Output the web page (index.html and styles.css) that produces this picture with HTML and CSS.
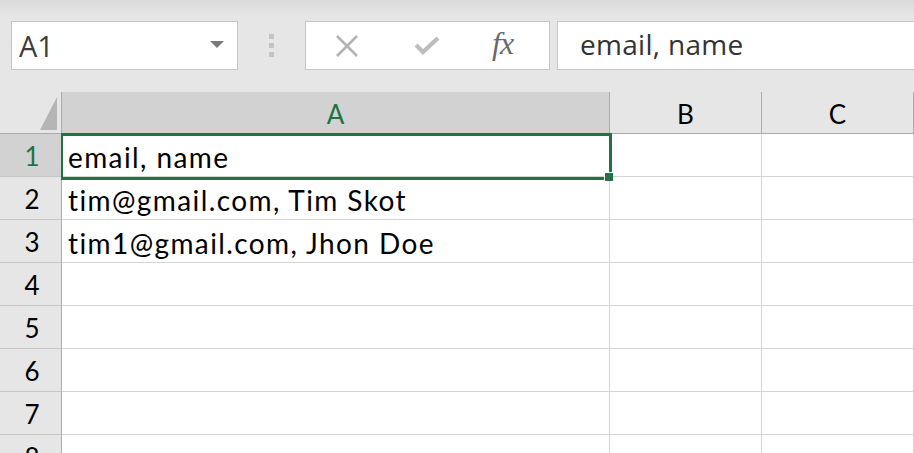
FILE: index.html
```html
<!DOCTYPE html>
<html>
<head>
<meta charset="utf-8">
<link rel="stylesheet" href="styles.css">
</head>
<body>
<div class="toolbar">
  <div class="namebox">
    <span class="nb-text">A1</span>
    <svg class="nb-arrow" width="14" height="8" viewBox="0 0 14 8"><polygon points="0,0 14,0 7,7" fill="#7a7a7a"/></svg>
  </div>
  <div class="grip"><i></i><i></i><i></i></div>
  <div class="fbuttons">
    <svg class="ico-x" width="24" height="22" viewBox="0 0 24 22"><path d="M2 1 L22 21 M22 1 L2 21" stroke="#b3b3b3" stroke-width="2.6" fill="none"/></svg>
    <svg class="ico-check" width="26" height="20" viewBox="0 0 26 20"><path d="M2 9 L9 16 L24 2" stroke="#bdbdbd" stroke-width="4.2" fill="none"/></svg>
    <span class="fx">fx</span>
  </div>
  <div class="formula">email, name</div>
</div>
<div class="sheet">
  <div class="grid">
    <div class="corner"><span class="tri"></span></div>
    <div class="colh sel">A</div>
    <div class="colh">B</div>
    <div class="colh">C</div>

    <div class="rowh sel">1</div><div class="cell">email, name</div><div class="cell"></div><div class="cell"></div>
    <div class="rowh">2</div><div class="cell">tim@gmail.com, Tim Skot</div><div class="cell"></div><div class="cell"></div>
    <div class="rowh">3</div><div class="cell">tim1@gmail.com, Jhon Doe</div><div class="cell"></div><div class="cell"></div>
    <div class="rowh">4</div><div class="cell"></div><div class="cell"></div><div class="cell"></div>
    <div class="rowh">5</div><div class="cell"></div><div class="cell"></div><div class="cell"></div>
    <div class="rowh">6</div><div class="cell"></div><div class="cell"></div><div class="cell"></div>
    <div class="rowh">7</div><div class="cell"></div><div class="cell"></div><div class="cell"></div>
    <div class="rowh">8</div><div class="cell"></div><div class="cell"></div><div class="cell"></div>
  </div>
  <div class="selection"><span class="handle"></span></div>
</div>
</body>
</html>
```
FILE: styles.css
```css
html, body {
  margin: 0;
  padding: 0;
  width: 914px;
  height: 453px;
  overflow: hidden;
  background: #e6e6e6;
}
.toolbar {
  height: 92px;
  box-sizing: border-box;
  padding-top: 21px;
  display: flex;
  align-items: flex-start;
  background: linear-gradient(#d9d9d9 0px, #e6e6e6 16px, #e6e6e6 100%);
  font-family: "Open Sans", "Noto Sans", sans-serif;
}
.namebox {
  margin-left: 11px;
  width: 227px;
  height: 49px;
  box-sizing: border-box;
  border: 1px solid #c6c6c6;
  background: #fff;
  display: flex;
  align-items: center;
  justify-content: space-between;
  padding: 0 13px 0 7px;
}
.nb-text {
  font-size: 29px;
  line-height: 45px;
  color: #3c3c3c;
}
.nb-arrow { margin-bottom: 2px; }
.grip {
  width: 67px;
  height: 49px;
  display: flex;
  flex-direction: column;
  align-items: center;
  justify-content: center;
  gap: 4px;
}
.grip i {
  display: block;
  width: 5px;
  height: 5px;
  background: #c4c4c4;
}
.fbuttons {
  width: 245px;
  height: 49px;
  box-sizing: border-box;
  border: 1px solid #c6c6c6;
  background: #fff;
  display: flex;
  align-items: center;
}
.ico-x { margin-left: 29px; }
.ico-check { margin-left: 55px; margin-top: 1px; }
.fx {
  margin-left: 52px;
  font-family: "Liberation Serif", "DejaVu Serif", serif;
  font-style: italic;
  font-size: 32px;
  color: #6a6a6a;
  letter-spacing: -1px;
  margin-top: -4px;
}
.formula {
  margin-left: 7px;
  flex: 1;
  height: 49px;
  box-sizing: border-box;
  border: 1px solid #c6c6c6;
  border-right: none;
  background: #fff;
  font-size: 28px;
  letter-spacing: 0.3px;
  color: #333;
  padding-left: 22px;
  line-height: 45px;
}
.sheet {
  position: relative;
}
.grid {
  display: grid;
  grid-template-columns: 62px 548px 152px 152px;
  grid-template-rows: 42px repeat(8, 43px);
  font-family: "Lato", "Open Sans", sans-serif;
  font-size: 26px;
  color: #000;
}
.grid > div {
  box-sizing: border-box;
  border-right: 1px solid #d4d4d4;
  border-bottom: 1px solid #d4d4d4;
}
.corner {
  background: #e6e6e6;
  border-right: 1px solid #ababab !important;
  border-bottom: 1px solid #ababab !important;
  position: relative;
}
.tri {
  position: absolute;
  right: 4px;
  bottom: 3px;
  width: 0;
  height: 0;
  border-left: 17px solid transparent;
  border-bottom: 33px solid #b5b5b5;
}
.colh {
  background: #e6e6e6;
  border-right: 1px solid #ababab !important;
  border-bottom: 1px solid #ababab !important;
  display: flex;
  align-items: center;
  justify-content: center;
  padding-top: 2px;
}
.colh.sel {
  background: #d2d2d2;
  color: #217346;
}
.rowh {
  background: #e6e6e6;
  border-right: 1px solid #ababab !important;
  border-bottom: 1px solid #c6c6c6 !important;
  display: flex;
  align-items: center;
  justify-content: center;
  padding-left: 3px;
  padding-top: 2px;
}
.rowh.sel {
  background: #d2d2d2;
  color: #217346;
}
.cell {
  background: #fff;
  display: flex;
  align-items: center;
  padding-left: 6px;
  padding-top: 3px;
  white-space: nowrap;
  font-size: 28px;
  letter-spacing: 1.4px;
}
.selection {
  position: absolute;
  left: 61px;
  top: 41px;
  width: 551px;
  height: 47px;
  box-sizing: border-box;
  border: 2px solid #217346;
  border-width: 3px 3px 3px 2px;
}
.handle {
  position: absolute;
  right: -4px;
  bottom: -4px;
  width: 8px;
  height: 8px;
  background: #217346;
  border: 1px solid #fff;
  border-right: none;
  border-bottom: none;
}
```
